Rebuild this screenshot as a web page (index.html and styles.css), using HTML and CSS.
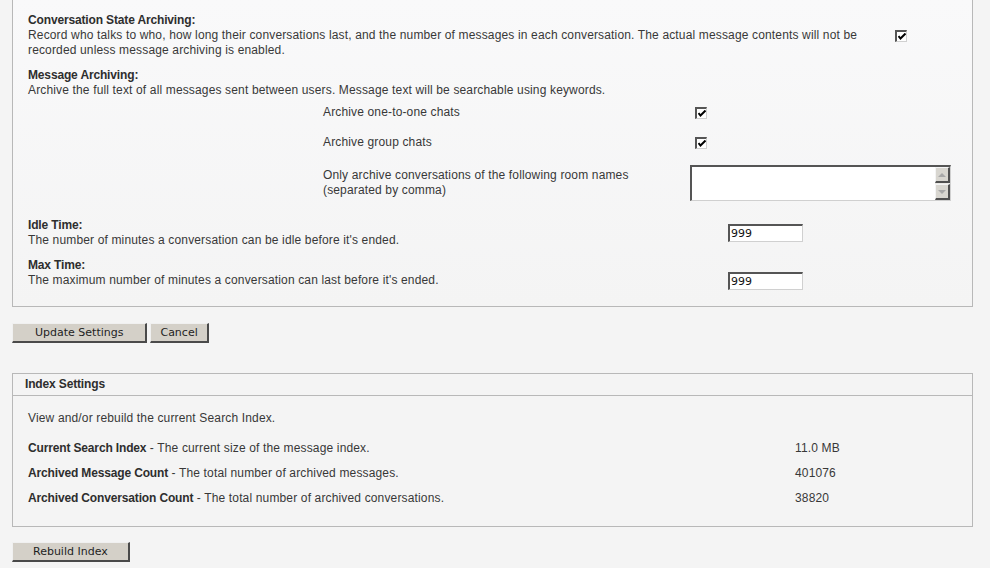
FILE: index.html
```html
<!DOCTYPE html>
<html lang="en">
<head>
  <meta charset="UTF-8" />
  <meta name="viewport" content="width=device-width, initial-scale=1.0" />
  <title>Archiving Settings</title>
  <link rel="stylesheet" href="styles.css">
</head>
<body>
  <div class="panel panel-cont">
    <div class="setting">
      <div class="setting-text wide">
        <b>Conversation State Archiving:</b><br>
        Record who talks to who, how long their conversations last, and the number of messages in each conversation. The actual message contents will not be recorded unless message archiving is enabled.
      </div>
      <span class="checkbox"><svg width="8" height="7" viewBox="0 0 8 7"><polyline points="0.5,3 2.5,5.5 7.5,0.5" fill="none" stroke="#000" stroke-width="2"/></svg></span>
    </div>

    <div class="setting">
      <div class="setting-text">
        <b>Message Archiving:</b><br>
        Archive the full text of all messages sent between users. Message text will be searchable using keywords.
      </div>
    </div>

    <div class="sub-list">
      <div class="sub">
        <div class="sub-label">Archive one-to-one chats</div>
        <span class="checkbox sub-check"><svg width="8" height="7" viewBox="0 0 8 7"><polyline points="0.5,3 2.5,5.5 7.5,0.5" fill="none" stroke="#000" stroke-width="2"/></svg></span>
      </div>
      <div class="sub">
        <div class="sub-label">Archive group chats</div>
        <span class="checkbox sub-check"><svg width="8" height="7" viewBox="0 0 8 7"><polyline points="0.5,3 2.5,5.5 7.5,0.5" fill="none" stroke="#000" stroke-width="2"/></svg></span>
      </div>
      <div class="sub">
        <div class="sub-label">Only archive conversations of the following room names<br>(separated by comma)</div>
        <div class="textbox">
          <textarea></textarea>
          <div class="scroll">
            <span class="scroll-btn"><i class="arrow-up"></i></span>
            <span class="scroll-btn"><i class="arrow-down"></i></span>
          </div>
        </div>
      </div>
    </div>

    <div class="setting">
      <div class="setting-text time">
        <b>Idle Time:</b><br>
        The number of minutes a conversation can be idle before it's ended.
      </div>
      <input type="text" class="field" value="999">
    </div>

    <div class="setting">
      <div class="setting-text time">
        <b>Max Time:</b><br>
        The maximum number of minutes a conversation can last before it's ended.
      </div>
      <input type="text" class="field field-low" value="999">
    </div>
  </div>

  <div class="buttons">
    <button class="btn">Update Settings</button>
    <button class="btn btn-small">Cancel</button>
  </div>

  <div class="panel index-panel">
    <div class="panel-head">Index Settings</div>
    <div class="panel-body">
      <p class="intro">View and/or rebuild the current Search Index.</p>
      <div class="stat">
        <div class="stat-label"><b>Current Search Index</b> - The current size of the message index.</div>
        <div>11.0 MB</div>
      </div>
      <div class="stat">
        <div class="stat-label"><b>Archived Message Count</b> - The total number of archived messages.</div>
        <div>401076</div>
      </div>
      <div class="stat">
        <div class="stat-label"><b>Archived Conversation Count</b> - The total number of archived conversations.</div>
        <div>38820</div>
      </div>
    </div>
  </div>

  <div class="buttons rebuild">
    <button class="btn btn-rebuild">Rebuild Index</button>
  </div>
</body>
</html>
```

FILE: styles.css
```css
body {
  font-family: "Liberation Sans", Arial, sans-serif;
  font-size: 12px;
  line-height: 15px;
  letter-spacing: 0.15px;
  color: #383838;
  background-color: #f4f4f4;
  margin: 0;
  padding: 0 12px;
}
b {
  color: #2e2e2e;
  letter-spacing: -0.15px;
}
.panel {
  width: 959px;
  border: 1px solid #b8b8b8;
}
.panel-cont {
  border-top: none;
  padding: 13px 15px 18px 15px;
  box-sizing: border-box;
  width: 961px;
  background: linear-gradient(#f9f9fa, #f4f4f4);
}
.setting {
  display: flex;
  align-items: center;
  margin-bottom: 10px;
}
.setting:last-child {
  margin-bottom: 0;
}
.setting-text.wide {
  width: 867px;
}
.setting-text.time {
  width: 700px;
}
.checkbox {
  display: inline-flex;
  align-items: center;
  justify-content: center;
  width: 12px;
  height: 12px;
  box-sizing: border-box;
  background: #ffffff;
  border-style: solid;
  border-width: 2px 1px 1px 2px;
  border-color: #555555 #d0d0d0 #d0d0d0 #555555;
}
.checkbox svg {
  display: block;
}
.sub-list {
  display: flex;
  flex-direction: column;
  gap: 15px;
  margin: -3px 0 17px 295px;
}
.sub {
  display: flex;
  align-items: center;
}
.sub-label {
  width: 367px;
}
.sub-check {
  margin-left: 5px;
}
.textbox {
  display: flex;
  width: 261px;
  height: 36px;
  box-sizing: border-box;
  background: #ffffff;
  border-style: solid;
  border-width: 2px 1px 1px 2px;
  border-color: #555555 #d0d0d0 #d0d0d0 #555555;
}
.textbox textarea {
  flex: 1;
  border: none;
  resize: none;
  outline: none;
  padding: 1px;
  margin: 0;
  font-family: "DejaVu Sans", Verdana, sans-serif;
  font-size: 11px;
}
.scroll {
  display: flex;
  flex-direction: column;
  justify-content: space-between;
  width: 15px;
  background: #ebeae6;
}
.scroll-btn {
  display: flex;
  align-items: center;
  justify-content: center;
  height: 16px;
  box-sizing: border-box;
  background: #d8d6d0;
  border-style: solid;
  border-width: 1px 2px 2px 1px;
  border-color: #f4f4f4 #505050 #505050 #f4f4f4;
}
.arrow-up, .arrow-down {
  width: 0;
  height: 0;
  border-left: 4px solid transparent;
  border-right: 4px solid transparent;
}
.arrow-up {
  border-bottom: 4px solid #a8a8a8;
}
.arrow-down {
  border-top: 4px solid #a8a8a8;
}
.field {
  width: 75px;
  height: 18px;
  box-sizing: border-box;
  padding: 0 1px;
  margin: 0;
  font-family: "DejaVu Sans", Verdana, sans-serif;
  font-size: 11px;
  letter-spacing: 0;
  color: #111;
  background: #ffffff;
  border-style: solid;
  border-width: 2px 1px 1px 2px;
  border-color: #555555 #d0d0d0 #d0d0d0 #555555;
  outline: none;
}
.field-low {
  align-self: flex-end;
  margin-bottom: -2px;
}
.buttons {
  display: flex;
  gap: 3px;
  margin: 16px 0 30px 0;
}
.btn {
  height: 20px;
  padding: 0 22px;
  margin: 0;
  font-family: "DejaVu Sans", Verdana, sans-serif;
  font-size: 11px;
  letter-spacing: 0;
  color: #1e1e1e;
  background-color: #d4d0c8;
  border-style: solid;
  border-width: 1px 2px 2px 1px;
  border-color: #f0f0f0 #4a4a4a #4a4a4a #f0f0f0;
  cursor: pointer;
}
.btn-small {
  padding: 0 9px;
}
.btn-rebuild {
  padding: 0 20px;
}
.panel-head {
  height: 21px;
  line-height: 21px;
  padding-left: 12px;
  font-weight: bold;
  letter-spacing: -0.15px;
  color: #2e2e2e;
  border-bottom: 1px solid #b8b8b8;
}
.panel-body {
  padding: 15px 15px 20px 15px;
}
.intro {
  margin: 0 0 15px 0;
}
.stat {
  display: flex;
  margin-bottom: 10px;
}
.stat:last-child {
  margin-bottom: 0;
}
.stat-label {
  width: 767px;
}
.rebuild {
  margin: 15px 0 0 0;
}
```
